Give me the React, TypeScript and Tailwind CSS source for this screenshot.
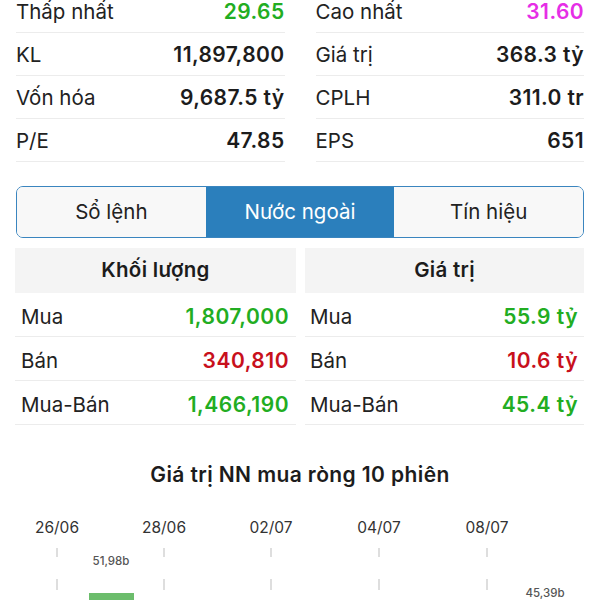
import React from "react";

const font = { fontFamily: "Inter, 'Noto Sans', sans-serif" };

type Stat = { label: string; value: string; color?: string };

const left: Stat[] = [
  { label: "Thấp nhất", value: "29.65", color: "text-[#22ad22]" },
  { label: "KL", value: "11,897,800" },
  { label: "Vốn hóa", value: "9,687.5 tỷ" },
  { label: "P/E", value: "47.85" },
];
const right: Stat[] = [
  { label: "Cao nhất", value: "31.60", color: "text-[#e62ee6]" },
  { label: "Giá trị", value: "368.3 tỷ" },
  { label: "CPLH", value: "311.0 tr" },
  { label: "EPS", value: "651" },
];

function StatCol({ items }: { items: Stat[] }) {
  return (
    <div className="flex flex-col">
      {items.map((s) => (
        <div
          key={s.label}
          className="h-[43px] pt-[2px] flex items-center justify-between border-b border-[#ececec]"
        >
          <span className="text-[20.5px] text-[#222]">{s.label}</span>
          <span className={`text-[21px] tracking-[0.4px] font-semibold ${s.color ?? "text-[#1c1c1c]"}`}>
            {s.value}
          </span>
        </div>
      ))}
    </div>
  );
}

type Row = { label: string; value: string; color: string };

function Table({ title, rows, pad }: { title: string; rows: Row[]; pad: string }) {
  return (
    <div className="flex flex-col">
      <div className="h-[45px] bg-[#f4f4f4] flex items-center justify-center text-[20.5px] tracking-[0.3px] font-semibold text-[#1c1c1c]">
        {title}
      </div>
      {rows.map((r) => (
        <div
          key={r.label}
          className={`h-[44px] pt-[5px] flex items-center justify-between border-b border-[#ececec] ${pad}`}
        >
          <span className="text-[20.5px] text-[#222]">{r.label}</span>
          <span className={`text-[21px] tracking-[0.5px] font-semibold ${r.color}`}>{r.value}</span>
        </div>
      ))}
    </div>
  );
}

const G = "text-[#22ad22]";
const R = "text-[#c8101c]";

export default function App() {
  const ticks = [57, 164, 271, 379, 487];
  const labels = ["26/06", "28/06", "02/07", "04/07", "08/07"];
  return (
    <div className="w-[600px] h-[600px] overflow-hidden bg-white" style={font}>
      <div className="px-4 -mt-[10px] grid grid-cols-2 gap-[31px]">
        <StatCol items={left} />
        <StatCol items={right} />
      </div>

      <div className="mx-4 mt-[24px] h-[52px] flex border-[1.5px] border-[#3a85bf] rounded-[7px] overflow-hidden text-[20.5px]">
        <div className="flex-1 flex items-center justify-center bg-[#f8f8f8] text-[#222]">Sổ lệnh</div>
        <div className="flex-1 flex items-center justify-center bg-[#2b7fbc] text-white">Nước ngoài</div>
        <div className="flex-1 flex items-center justify-center bg-[#f8f8f8] text-[#222]">Tín hiệu</div>
      </div>

      <div className="mt-[10px] pl-[15px] pr-[16px] grid grid-cols-[281px_1fr] gap-[9px]">
        <Table
          title="Khối lượng"
          pad="pl-[6px] pr-[7px]"
          rows={[
            { label: "Mua", value: "1,807,000", color: G },
            { label: "Bán", value: "340,810", color: R },
            { label: "Mua-Bán", value: "1,466,190", color: G },
          ]}
        />
        <Table
          title="Giá trị"
          pad="pl-[5px] pr-[6px]"
          rows={[
            { label: "Mua", value: "55.9 tỷ", color: G },
            { label: "Bán", value: "10.6 tỷ", color: R },
            { label: "Mua-Bán", value: "45.4 tỷ", color: G },
          ]}
        />
      </div>

      <div className="mt-[38px] h-[24px] flex items-center justify-center text-[21px] tracking-[0.4px] font-semibold text-[#1c1c1c]">
        Giá trị NN mua ròng 10 phiên
      </div>

      <svg width="600" height="100" className="block mt-[13px]" style={font}>
        {ticks.map((x, i) => (
          <g key={x}>
            <text x={x} y={33} textAnchor="middle" fontSize="15.5" fill="#333">
              {labels[i]}
            </text>
            <line x1={x} y1={48} x2={x} y2={57} stroke="#bdbdbd" strokeWidth="1" />
            <line x1={x} y1={79} x2={x} y2={90} stroke="#bdbdbd" strokeWidth="1" />
          </g>
        ))}
        <text x={111} y={65} textAnchor="middle" fontSize="11.5" fontWeight="500" fill="#555">
          51,98b
        </text>
        <rect x={89} y={93} width={45} height={10} fill="#6cbd6c" />
        <text x={545} y={97} textAnchor="middle" fontSize="11.5" fontWeight="500" fill="#555">
          45,39b
        </text>
      </svg>
    </div>
  );
}
